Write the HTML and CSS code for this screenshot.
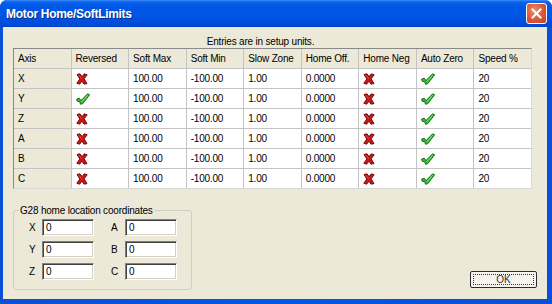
FILE: index.html
```html
<!DOCTYPE html>
<html lang="en">
<head>
  <meta charset="UTF-8">
  <title>Motor Home/SoftLimits</title>
  <link rel="stylesheet" href="styles.css">
</head>
<body>

<svg class="defs" width="0" height="0">
  <symbol id="no" viewBox="0 0 12 12">
    <polygon points="1,1.5 4,0.8 6,3.6 8.3,0.8 11.2,1.8 8.2,5.8 11,10.6 8,11.2 6,8.2 3.6,11.2 0.8,10.2 3.8,6" fill="#c81818" stroke="#6e0000" stroke-width="0.9" stroke-linejoin="round"/>
    <path d="M3 2.4 L5.6 5.6" stroke="#ee5050" stroke-width="1"/>
  </symbol>
  <symbol id="yes" viewBox="0 0 16 12">
    <polygon points="1.5,6.2 4.2,5.2 6,7.6 12.6,0.8 14.6,1.8 7.6,10.8 5.4,11.2 4.8,8.6 2.4,8.4" fill="#38c038" stroke="#0c5a0c" stroke-width="0.9" stroke-linejoin="round"/>
    <path d="M6.8 8.6 L12.6 2.2" stroke="#8ef08e" stroke-width="0.8"/>
  </symbol>
</svg>

<div class="window">
  <div class="titlebar">
    <span class="title">Motor Home/SoftLimits</span>
    <button class="close" type="button">
      <svg width="11" height="11" viewBox="0 0 11 11"><path d="M1.5 1.5 L9.5 9.5 M9.5 1.5 L1.5 9.5" stroke="#fff" stroke-width="2" stroke-linecap="square"/></svg>
    </button>
  </div>

  <div class="client">
    <div class="caption">Entries are in setup units.</div>

    <div class="grid">
      <div class="head">Axis</div>
      <div class="head">Reversed</div>
      <div class="head">Soft Max</div>
      <div class="head">Soft Min</div>
      <div class="head">Slow Zone</div>
      <div class="head">Home Off.</div>
      <div class="head">Home Neg</div>
      <div class="head">Auto Zero</div>
      <div class="head">Speed %</div>

      <div class="axis">X</div>
      <div class="flag"><svg class="no"><use href="#no"/></svg></div>
      <div>100.00</div><div>-100.00</div><div>1.00</div><div>0.0000</div>
      <div class="flag"><svg class="no"><use href="#no"/></svg></div>
      <div class="flag"><svg class="yes"><use href="#yes"/></svg></div>
      <div>20</div>

      <div class="axis">Y</div>
      <div class="flag"><svg class="yes"><use href="#yes"/></svg></div>
      <div>100.00</div><div>-100.00</div><div>1.00</div><div>0.0000</div>
      <div class="flag"><svg class="no"><use href="#no"/></svg></div>
      <div class="flag"><svg class="yes"><use href="#yes"/></svg></div>
      <div>20</div>

      <div class="axis">Z</div>
      <div class="flag"><svg class="no"><use href="#no"/></svg></div>
      <div>100.00</div><div>-100.00</div><div>1.00</div><div>0.0000</div>
      <div class="flag"><svg class="no"><use href="#no"/></svg></div>
      <div class="flag"><svg class="yes"><use href="#yes"/></svg></div>
      <div>20</div>

      <div class="axis">A</div>
      <div class="flag"><svg class="no"><use href="#no"/></svg></div>
      <div>100.00</div><div>-100.00</div><div>1.00</div><div>0.0000</div>
      <div class="flag"><svg class="no"><use href="#no"/></svg></div>
      <div class="flag"><svg class="yes"><use href="#yes"/></svg></div>
      <div>20</div>

      <div class="axis">B</div>
      <div class="flag"><svg class="no"><use href="#no"/></svg></div>
      <div>100.00</div><div>-100.00</div><div>1.00</div><div>0.0000</div>
      <div class="flag"><svg class="no"><use href="#no"/></svg></div>
      <div class="flag"><svg class="yes"><use href="#yes"/></svg></div>
      <div>20</div>

      <div class="axis">C</div>
      <div class="flag"><svg class="no"><use href="#no"/></svg></div>
      <div>100.00</div><div>-100.00</div><div>1.00</div><div>0.0000</div>
      <div class="flag"><svg class="no"><use href="#no"/></svg></div>
      <div class="flag"><svg class="yes"><use href="#yes"/></svg></div>
      <div>20</div>
    </div>

    <div class="bottom">
      <fieldset class="home">
        <legend>G28 home location coordinates</legend>
        <div class="coords">
          <label for="hx">X</label><input id="hx" type="text" value="0">
          <label for="ha">A</label><input id="ha" type="text" value="0">
          <label for="hy">Y</label><input id="hy" type="text" value="0">
          <label for="hb">B</label><input id="hb" type="text" value="0">
          <label for="hz">Z</label><input id="hz" type="text" value="0">
          <label for="hc">C</label><input id="hc" type="text" value="0">
        </div>
      </fieldset>
      <button class="ok" type="button"><span>OK</span></button>
    </div>
  </div>
</div>

</body>
</html>
```

FILE: styles.css
```css
body {
  margin: 0;
  background: #fff;
  font-family: "Liberation Sans", Arial, sans-serif;
  font-size: 10px;
  letter-spacing: -0.2px;
  color: #000;
}

.defs {
  position: absolute;
}

.window {
  width: 552px;
  height: 304px;
  box-sizing: border-box;
  background: linear-gradient(to right, #0a4fd8, #0058e8 50%, #0a4fd8);
  border-radius: 7px 7px 0 0;
  display: flex;
  flex-direction: column;
}

.titlebar {
  height: 27px;
  flex: none;
  display: flex;
  align-items: center;
  justify-content: space-between;
  padding: 0 5px 0 6px;
  border-radius: 7px 7px 0 0;
  background: linear-gradient(to bottom, #3d8cf5 0, #0b62ec 2px, #0058e6 6px, #0055e4 60%, #004ad8 90%, #0043c8 100%);
}

.title {
  color: #fff;
  font-weight: bold;
  font-size: 12px;
  letter-spacing: -0.3px;
  text-shadow: 1px 1px 0 #0a2c8a;
}

.close {
  width: 21px;
  height: 21px;
  padding: 0;
  border: 1px solid #fff;
  border-radius: 3px;
  background: radial-gradient(circle at 40% 35%, #f08a6c, #d9532f 60%, #c4401f);
  display: flex;
  align-items: center;
  justify-content: center;
}

.client {
  flex: 1;
  margin: 0 5px 5px 3px;
  background: #ece9d8;
}

.caption {
  width: 519px;
  box-sizing: border-box;
  margin-left: 10px;
  padding: 8px 24px 0 0;
  line-height: 13px;
  text-align: center;
}

.grid {
  display: grid;
  grid-template-columns: repeat(9, 1fr);
  gap: 1px;
  width: 519px;
  box-sizing: border-box;
  margin-left: 10px;
  background: #c4c4c4;
  border: 1px solid #8a8a8a;
  border-right-color: #d8d8d8;
  border-bottom-color: #d8d8d8;
}

.grid > div {
  height: 19px;
  line-height: 19px;
  padding: 0 4px;
  background: #fff;
  white-space: nowrap;
  overflow: hidden;
}

.grid > .head,
.grid > .axis {
  background: #ece9d8;
}

.grid > .flag {
  display: flex;
  align-items: center;
}

.no {
  width: 12px;
  height: 12px;
}

.yes {
  width: 16px;
  height: 12px;
  margin-left: -1px;
}

.bottom {
  display: flex;
  align-items: flex-end;
  justify-content: space-between;
  padding: 0 10px 0 10px;
}

.home {
  width: 179px;
  height: 86px;
  box-sizing: border-box;
  margin: 15px 0 0 0;
  padding: 2px 0 8px 5px;
  border: 1px solid #d0d0bf;
  border-radius: 3px;
}

.home legend {
  padding: 0 1px;
  line-height: 13px;
}

.coords {
  display: grid;
  grid-template-columns: 13px 69px 14px 53px;
  row-gap: 5px;
  margin-left: 10px;
}

.coords label {
  line-height: 17px;
}

.coords input {
  width: 52px;
  height: 17px;
  box-sizing: border-box;
  margin: 0;
  padding: 0 0 0 3px;
  border: 1px solid;
  border-color: #808080 #fff #fff #808080;
  box-shadow: inset 1px 1px 0 #404040, inset -1px -1px 0 #d4d0c8;
  background: #fff;
  font: inherit;
  outline: none;
}

.ok {
  width: 67px;
  height: 17px;
  margin-bottom: 2px;
  padding: 2px;
  border: 1px solid #2c2c2c;
  border-radius: 2px;
  background: #f5f4ef;
  font: inherit;
  color: #333;
  box-sizing: border-box;
}

.ok span {
  display: flex;
  align-items: center;
  justify-content: center;
  height: 100%;
  border: 1px dotted #333;
  box-sizing: border-box;
}
```
